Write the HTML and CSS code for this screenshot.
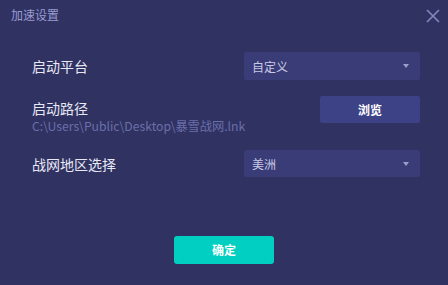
FILE: index.html
```html
<!DOCTYPE html>
<html lang="zh">
<head>
<meta charset="utf-8">
<link rel="stylesheet" href="styles.css">
</head>
<body>
<div class="dialog">
  <div class="header">
    <span class="title">加速设置</span>
    <svg class="close" width="14" height="14" viewBox="0 0 14 14"><path d="M1 1L13 13M13 1L1 13" stroke="#8587bd" stroke-width="1.6" fill="none"/></svg>
  </div>
  <div class="body">
    <div class="row row1">
      <span class="label">启动平台</span>
      <div class="select"><span>自定义</span><i class="arrow"></i></div>
    </div>
    <div class="row row2">
      <div class="pathblock">
        <div class="label tall">启动路径</div>
        <div class="path">C:\Users\Public\Desktop\暴雪战网.lnk</div>
      </div>
      <div class="browse">浏览</div>
    </div>
    <div class="row row3">
      <span class="label">战网地区选择</span>
      <div class="select"><span>美洲</span><i class="arrow"></i></div>
    </div>
  </div>
  <div class="footer">
    <div class="ok">确定</div>
  </div>
</div>
</body>
</html>
```
FILE: styles.css
```css
html, body {
  margin: 0;
  padding: 0;
}
body {
  width: 448px;
  height: 285px;
  background: #303262;
  font-family: "Noto Sans CJK SC", "Noto Sans", sans-serif;
  overflow: hidden;
}
.dialog {
  width: 448px;
  height: 285px;
  display: flex;
  flex-direction: column;
}
.header {
  height: 29px;
  display: flex;
  align-items: center;
  justify-content: space-between;
  padding: 0 8px 0 11px;
}
.title {
  font-size: 12px;
  color: #9a9cd2;
  line-height: 29px;
}
.close {
  margin-top: 2px;
}
.body {
  padding: 0 28px 0 32px;
  display: flex;
  flex-direction: column;
}
.row {
  display: flex;
  justify-content: space-between;
}
.row1 {
  margin-top: 23px;
  align-items: center;
  height: 28px;
}
.row2 {
  margin-top: 16px;
  align-items: flex-start;
  height: 36px;
}
.row3 {
  margin-top: 18px;
  align-items: center;
  height: 27px;
}
.label {
  font-size: 14px;
  color: #e8e8f4;
  line-height: 16px;
}
.label.tall {
  line-height: 20px;
}
.select {
  width: 176px;
  height: 100%;
  box-sizing: border-box;
  background: #393c77;
  border-radius: 2px;
  display: flex;
  align-items: center;
  justify-content: space-between;
  padding: 0 11px 0 8px;
  font-size: 12px;
  color: #c9cae6;
}
.arrow {
  width: 0;
  height: 0;
  border-left: 3.5px solid transparent;
  border-right: 3.5px solid transparent;
  border-top: 4px solid #9c9ec9;
}
.pathblock {
  padding-top: 1.5px;
}
.path {
  font-size: 12.2px;
  line-height: 17px;
  color: #6b6fa9;
}
.browse {
  width: 100px;
  height: 27px;
  background: #3d4287;
  border-radius: 2px;
  color: #ffffff;
  font-size: 12px;
  font-weight: bold;
  line-height: 27px;
  text-align: center;
}
.footer {
  margin-top: 59px;
  display: flex;
  justify-content: center;
}
.ok {
  width: 100px;
  height: 28px;
  background: #00cfc1;
  border-radius: 3px;
  color: #ffffff;
  font-size: 12px;
  font-weight: bold;
  line-height: 28px;
  text-align: center;
}
```
